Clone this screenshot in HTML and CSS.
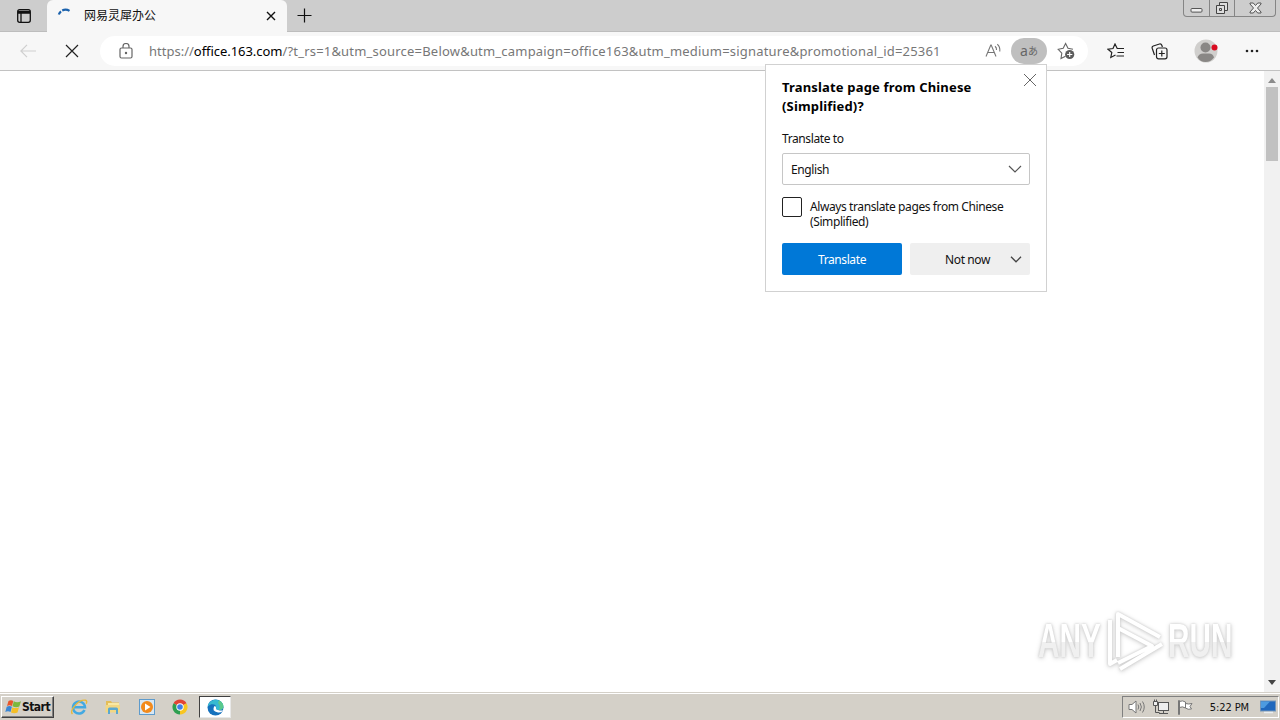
FILE: index.html
```
<!DOCTYPE html>
<html lang="en">
<head>
  <meta charset="UTF-8">
  <meta name="viewport" content="width=device-width, initial-scale=1.0">
  <title>网易灵犀办公</title>
  <link rel="stylesheet" href="styles.css">
</head>
<body>

  <header class="tab-strip">
    <button class="tab-actions" aria-label="Tab actions">
      <svg width="16" height="16" viewBox="0 0 16 16" fill="none" stroke="#111" stroke-width="1.3">
        <rect x="1.7" y="1.7" width="12.6" height="12.6" rx="2"/>
        <path d="M2 3.5h12M2 5h12M5 5v9"/>
      </svg>
    </button>
    <div class="tab">
      <svg class="spinner" width="16" height="16" viewBox="0 0 16 16" fill="none" stroke="#1b62ad" stroke-width="2.2">
        <path d="M1.8 6.5A7 7 0 0 1 4 3.3M5.2 2.4A7.3 7.3 0 0 1 12.5 2.8"/>
      </svg>
      <span class="tab-title">网易灵犀办公</span>
      <button class="tab-close" aria-label="Close tab">
        <svg width="10" height="10" viewBox="0 0 10 10" stroke="#111" stroke-width="1.4"><path d="M1 1l8 8M9 1l-8 8"/></svg>
      </button>
    </div>
    <button class="new-tab" aria-label="New tab">
      <svg width="15" height="15" viewBox="0 0 15 15" stroke="#111" stroke-width="1.2"><path d="M7.5 .5v14M.5 7.5h14"/></svg>
    </button>
    <div class="window-buttons">
      <button class="win-min" aria-label="Minimize">
        <svg width="13" height="14" viewBox="0 0 13 14" fill="#eee" stroke="#555"><rect x="1" y="7.5" width="11" height="3.6" rx="1"/></svg>
      </button>
      <button class="win-restore" aria-label="Restore">
        <svg width="14" height="14" viewBox="0 0 14 14" fill="#ddd" stroke="#444"><path d="M4.5 1.5h8v8h-8z"/><path d="M1.5 4.5h8v8h-8z"/><path d="M4.5 7.5h2v2h-2z"/></svg>
      </button>
      <button class="win-close" aria-label="Close">
        <svg width="13" height="12" viewBox="0 0 13 12" fill="#eee" stroke="#555"><path d="M1 1h3.3l2.2 2.5L8.7 1H12v1L8.5 6l3.5 4v1H8.7L6.5 8.5 4.3 11H1v-1l3.5-4L1 2z"/></svg>
      </button>
    </div>
  </header>

  <nav class="toolbar">
    <button class="back" aria-label="Back">
      <svg width="16" height="14" viewBox="0 0 16 14" fill="none" stroke="#cfcfcf" stroke-width="1.2"><path d="M7 .8L.9 7 7 13.2M1 7h15"/></svg>
    </button>
    <button class="stop" aria-label="Stop">
      <svg width="14" height="14" viewBox="0 0 14 14" stroke="#222" stroke-width="1.2"><path d="M1 1l12 12M13 1L1 13"/></svg>
    </button>
    <div class="address-bar">
      <svg class="lock" width="14" height="16" viewBox="0 0 14 16" fill="none" stroke="#666" stroke-width="1.2">
        <rect x="1" y="5" width="12" height="10" rx="1.5"/><path d="M4 5V3.5a3 3 0 0 1 6 0V5"/><circle cx="7" cy="10" r=".6" fill="#666"/>
      </svg>
      <span class="url"><span class="scheme">https://</span><b>office.163.com</b>/?t_rs=1&amp;utm_source=Below&amp;utm_campaign=office163&amp;utm_medium=signature&amp;promotional_id=25361</span>
      <svg class="read-aloud" width="17" height="16" viewBox="0 0 17 16" fill="none" stroke="#777" stroke-width="1.1">
        <path d="M1 13.5L5.8 2h.4L11 13.5M2.9 9.5h6.2M10 3.2q1.8 1.3 1.5 3.8M12.3 1.2q3 2.4 2.5 7.3"/>
      </svg>
      <span class="translate-pill">a<small>あ</small></span>
      <svg class="favorite" width="18" height="18" viewBox="0 0 18 18" fill="none" stroke="#666" stroke-width="1.1">
        <path d="M8.5 14.2L4 16.5 4.8 11.2 1.2 7.3 6.2 6.3 8.6 1.5 11 6.3 16 7.2"/>
        <circle cx="12.7" cy="12.5" r="4.6" fill="#5c5c5c" stroke="none"/><path d="M12.7 9.9v5.2M10.1 12.5h5.2" stroke="#fff"/>
      </svg>
    </div>
    <svg class="favorites" width="18" height="16" viewBox="0 0 18 16" fill="none" stroke="#222" stroke-width="1.2">
      <path d="M8.5 12L3.8 14.5 4.8 9.5 1 6.2 6 5.5 8 1 10.2 5.5H17M10.5 9.5H17M9.5 13H17"/>
    </svg>
    <svg class="collections" width="17" height="17" viewBox="0 0 17 17" fill="none" stroke="#222" stroke-width="1.2">
      <path d="M3.5 12L1.2 5.2Q.7 3.6 2.3 3L8.5 1Q10.2.6 10.8 2.2L11.4 4"/>
      <rect x="5.5" y="5" width="10.5" height="10.8" rx="2"/><path d="M10.8 7.5v6M7.8 10.5h6"/>
    </svg>
    <svg class="profile" width="24" height="24" viewBox="0 0 24 24">
      <circle cx="12" cy="12" r="11.5" fill="#d0cfcd"/><circle cx="11.5" cy="8.5" r="5" fill="#898785"/>
      <path d="M3.5 18.5Q5 14.5 9 14.5h6q4 0 5 4-3.5 4.5-8.5 4.5t-8-4.5z" fill="#898785"/>
      <circle cx="20.5" cy="8.5" r="3" fill="#d90b20"/>
    </svg>
    <svg class="more" width="14" height="4" viewBox="0 0 14 4" fill="#222"><circle cx="2" cy="2" r="1.3"/><circle cx="7" cy="2" r="1.3"/><circle cx="12" cy="2" r="1.3"/></svg>
  </nav>

  <main class="page">
    <div class="viewport">
      <div class="watermark">
        <span class="mark-any">ANY</span>
        <svg width="58" height="62" viewBox="0 0 58 62" fill="none" stroke="#fff" stroke-width="4" stroke-linejoin="round">
          <path d="M12 47V4L54 27M12 18L46 36 12 53M4 10v44l7-4M14 59L56 34"/>
        </svg>
        <span class="mark-run">RUN</span>
      </div>
    </div>
    <div class="scrollbar">
      <svg width="8" height="5" viewBox="0 0 8 5" fill="#8b8b8b"><path d="M0 5L4 0l4 5z"/></svg>
      <div class="thumb"></div>
      <svg class="down" width="8" height="5" viewBox="0 0 8 5" fill="#444"><path d="M0 0h8L4 5z"/></svg>
    </div>
  </main>

  <section class="translate-popup">
    <button class="popup-close" aria-label="Close">
      <svg width="14" height="14" viewBox="0 0 14 14" stroke="#666" stroke-width="1"><path d="M1 1l12 12M13 1L1 13"/></svg>
    </button>
    <h1>Translate page from Chinese<br>(Simplified)?</h1>
    <p class="label">Translate to</p>
    <div class="select">
      <span>English</span>
      <svg width="14" height="8" viewBox="0 0 14 8" fill="none" stroke="#555" stroke-width="1.2"><path d="M1 1l6 6 6-6"/></svg>
    </div>
    <label class="always">
      <span class="checkbox"></span>
      <span class="always-text">Always translate pages from Chinese<br>(Simplified)</span>
    </label>
    <div class="actions">
      <button class="btn primary">Translate</button>
      <button class="btn secondary"><span>Not now</span>
        <svg width="12" height="7" viewBox="0 0 12 7" fill="none" stroke="#444" stroke-width="1.3"><path d="M1 .8l5 5 5-5"/></svg>
      </button>
    </div>
  </section>

  <footer class="taskbar">
    <button class="start">
      <svg width="17" height="16" viewBox="0 0 17 16">
        <path d="M3.5 2Q6 .4 8.3 2L7 7Q4.5 5.5 2 7z" fill="#e8562a"/>
        <path d="M8.8 2.3Q12 4 16 2.3L14.3 7.5Q11 9 7.5 7.3z" fill="#7cb83c"/>
        <path d="M1.7 7.7Q4.5 6.2 6.9 7.7L5.5 13Q3 11.5.3 13z" fill="#3a86d4"/>
        <path d="M7.3 8.2Q10.5 10 14 8.2L12.5 13.5Q9.5 15 6 13.5z" fill="#f5bf27"/>
      </svg>
      <span>Start</span>
    </button>
    <div class="quick-launch">
      <svg width="18" height="18" viewBox="0 0 18 18" fill="none">
        <path d="M14.5 12A6 6 0 1 1 15 9.3H4" stroke="#43a9e2" stroke-width="2.5"/>
        <path d="M2.5 16C-1 12.5 9 1 15.5 2.3q2 .5.7 3.5" stroke="#e8b93c" stroke-width="1.4"/>
      </svg>
      <svg width="18" height="18" viewBox="0 0 18 18">
        <path d="M2 3h5l1 1.5h7V14H2z" fill="#e4bd58"/><path d="M4 5h11v8H4z" fill="#f9e8a3"/>
        <path d="M1.5 7H16v7.5H1.5z" fill="#f2d783"/><path d="M4 16v-5q0-1.5 1.5-1.5h7Q14 9.5 14 11v5h-2v-4H6v4z" fill="#5ba8d0"/>
      </svg>
      <svg width="18" height="18" viewBox="0 0 18 18">
        <rect x="1.5" y="1.5" width="15" height="15" fill="#d7e7f4" stroke="#5e9bcc"/>
        <circle cx="9" cy="9" r="6" fill="#f28a1c"/><path d="M7 5.5l5.5 3.5L7 12.5z" fill="#fff"/>
      </svg>
      <svg width="16" height="16" viewBox="0 0 16 16">
        <path d="M8 8L1.5 4.25A7.5 7.5 0 0 1 14.5 4.25z" fill="#e24435"/>
        <path d="M8 8l6.5-3.75A7.5 7.5 0 0 1 8 15.5z" fill="#f8c620"/>
        <path d="M8 8v7.5A7.5 7.5 0 0 1 1.5 4.25z" fill="#2d9f50"/>
        <circle cx="8" cy="8" r="3.7" fill="#fff"/><circle cx="8" cy="8" r="2.8" fill="#3f7fe8"/>
      </svg>
    </div>
    <div class="task-active">
      <svg width="17" height="17" viewBox="0 0 17 17">
        <circle cx="8.5" cy="8.5" r="8" fill="#1571bd"/>
        <path d="M.6 7.5C2 1 9-1 13.5 2.3 18 6 16.8 11 12 11q-3 0-3.2-1.5C10.5 6.5 6 3 .6 7.5z" fill="#36b9d1"/>
        <path d="M12 1.3Q17 4 16.4 8.5 15.5 11 12 11q2-4-1-7z" fill="#59c98c"/>
        <path d="M7.5 7Q4 12 11 13.5q2.5.3 4.7-1.2L17 11.3Q14 12 11 11 8.5 10.5 9 8.5 9 7 7.5 7z" fill="#fff"/>
      </svg>
    </div>
    <div class="tray">
      <svg width="18" height="16" viewBox="0 0 18 16" fill="none" stroke="#777">
        <path d="M1 5.5h3L8 2v12l-4-3.5H1z" fill="#fff"/><path d="M10 5.5q1.5 2.5 0 5M12 4q2.8 4 0 8M14.5 2.5q3.5 5.5 0 11"/>
      </svg>
      <svg width="17" height="16" viewBox="0 0 17 16" fill="#eee" stroke="#555">
        <rect x="5.5" y="3.5" width="10" height="8"/><path d="M6 14.5h9M10.5 12v2"/><path d="M2.5 6v7.5h4" fill="none"/><path d="M.5 2.5h4v4h-4zM1.5 .5v2M3.5 .5v2"/>
      </svg>
      <svg width="17" height="16" viewBox="0 0 17 16" fill="#fff" stroke="#777">
        <path d="M1.5 1.5v14h1v-14zM2.5 2.5q3-1.5 6 .5v6q-3-2-6-.5zM8.5 4.5q3 1 6.5 0l-2 3 1.5 2.5q-3.5 1-6-1"/>
      </svg>
      <span class="clock">5:22 PM</span>
      <svg width="16" height="14" viewBox="0 0 16 14"><rect x=".5" y="1" width="15" height="10" fill="#2068bd" stroke="#7495b8"/><path d="M1 1.5h9L4 8H1z" fill="#4d9be0"/><path d="M4 12.5h9" stroke="#e9edf0" stroke-width="1.5"/></svg>
    </div>
  </footer>

</body>
</html>
```
FILE: styles.css
```
* {
  box-sizing: border-box;
}

body {
  margin: 0;
  width: 1280px;
  height: 720px;
  overflow: hidden;
  display: flex;
  flex-direction: column;
  background: #fff;
  color: #111;
  font-family: "Noto Sans", "Noto Sans CJK SC", sans-serif;
  font-size: 12px;
}

button {
  border: 0;
  padding: 0;
  background: none;
  font: inherit;
  color: inherit;
  letter-spacing: inherit;
  display: flex;
  align-items: center;
  justify-content: center;
}

svg {
  flex: none;
  display: block;
}

/* tabs */
.tab-strip {
  flex: none;
  height: 32px;
  display: flex;
  background: #cdcdcd;
  border-bottom: 1px solid #bdbdbd;
}

.tab-actions {
  width: 47px;
  height: 31px;
}

.tab {
  width: 240px;
  height: 32px;
  padding: 0 11px 0 10px;
  display: flex;
  align-items: center;
  background: #f7f7f7;
  border-radius: 6px 6px 0 0;
}

.tab-title {
  margin: -3px 0 0 11px;
  flex: 1;
  font-family: "Noto Sans CJK SC", sans-serif;
}

.new-tab {
  width: 35px;
  height: 31px;
}

.window-buttons {
  margin: 0 4px 0 auto;
  height: 17px;
  display: flex;
  border: 1px solid #858585;
  border-top: 0;
  border-radius: 0 0 4px 4px;
}

.window-buttons button {
  width: 25px;
}

.window-buttons button + button {
  border-left: 1px solid #858585;
}

.window-buttons .win-close {
  width: 41px;
}

/* toolbar */
.toolbar {
  flex: none;
  height: 39px;
  display: flex;
  align-items: center;
  background: #f7f7f7;
  border-bottom: 1px solid #c2c2c2;
}

.back {
  margin-left: 20px;
}

.stop {
  margin-left: 29px;
}

.address-bar {
  width: 988px;
  height: 30px;
  margin-left: 21px;
  padding-left: 19px;
  display: flex;
  align-items: center;
  background: #fff;
  border-radius: 15px;
}

.url {
  width: 836px;
  margin-left: 16px;
  color: #777;
  font-size: 13px;
  letter-spacing: 0.2px;
  white-space: nowrap;
}

.url .scheme {
  letter-spacing: 0;
}

.url b {
  color: #000;
  font-weight: normal;
  letter-spacing: -0.05px;
}

.translate-pill {
  width: 36px;
  height: 26px;
  margin: 0 10px 0 9px;
  padding-bottom: 2px;
  display: flex;
  align-items: center;
  justify-content: center;
  border-radius: 13px;
  background: #bfbfbf;
  color: #666;
  font-size: 14px;
}

.translate-pill small {
  font-size: 10px;
}

.favorites {
  margin-left: 19px;
}

.collections {
  margin-left: 26px;
}

.profile {
  margin-left: 26px;
}

.more {
  margin-left: 27px;
}

/* page */
.page {
  flex: 1;
  display: flex;
}

.viewport {
  flex: 1;
  display: flex;
  align-items: flex-end;
  justify-content: flex-end;
}

.watermark {
  margin: 0 30px 20px 0;
  display: flex;
  align-items: center;
  color: #fff;
  font-family: "Liberation Sans", Arial, sans-serif;
  font-size: 48px;
  font-weight: bold;
  line-height: 62px;
  filter: drop-shadow(0 0 1px #ccc) drop-shadow(0 1px 2px #d4d4d4);
}

.watermark span {
  width: 106px;
  transform: scaleX(0.62);
  transform-origin: left;
  background: linear-gradient(#fff 52%, #f0f0f0 52%);
  background-clip: text;
  color: transparent;
}

.mark-any {
  margin-right: -41px;
}

.mark-run {
  margin-right: -40px;
}

.watermark svg {
  margin: 0 4px 0 3px;
}

.scrollbar {
  width: 16px;
  padding: 7px 0;
  display: flex;
  flex-direction: column;
  align-items: center;
  background: #f1f1f1;
}

.thumb {
  width: 12px;
  height: 74px;
  margin-top: 4px;
  background: #c1c1c1;
}

.scrollbar .down {
  margin-top: auto;
}

/* translate popup */
.translate-popup {
  position: absolute;
  left: 765px;
  top: 64px;
  width: 282px;
  height: 228px;
  padding: 13px 16px 16px;
  background: #fff;
  border: 1px solid #d1d1d1;
  letter-spacing: -0.4px;
}

.popup-close {
  position: absolute;
  top: 8px;
  right: 9px;
}

.translate-popup h1 {
  margin: 0;
  font-size: 13px;
  line-height: 19px;
  letter-spacing: 0.17px;
  color: #000;
}

.label {
  margin: 14px 0 5px;
  line-height: 18px;
}

.select {
  height: 32px;
  padding: 0 7px 0 8px;
  display: flex;
  align-items: center;
  justify-content: space-between;
  border: 1px solid #c6c6c6;
  border-radius: 2px;
}

.always {
  height: 58px;
  padding-top: 12px;
  display: flex;
  line-height: 15px;
  white-space: nowrap;
}

.checkbox {
  flex: none;
  width: 20px;
  height: 20px;
  margin-right: 8px;
  border: 1px solid #222;
  border-radius: 2px;
}

.always-text {
  padding-top: 2px;
}

.actions {
  display: flex;
  gap: 8px;
}

.btn {
  width: 120px;
  height: 32px;
  border-radius: 2px;
}

.primary {
  background: #0078d7;
  color: #fff;
}

.secondary {
  padding-right: 8px;
  justify-content: flex-end;
  gap: 20px;
  background: #efefef;
}

/* taskbar */
.taskbar {
  flex: none;
  height: 28px;
  padding: 2px 1px 1px;
  display: flex;
  align-items: center;
  background: #d4d0c8;
  border-top: 1px solid #d4d0c8;
  box-shadow: inset 0 1px #fff;
}

.start {
  width: 53px;
  height: 22px;
  border: 1px solid;
  border-color: #fff #404040 #404040 #fff;
  box-shadow: inset -1px -1px #808080;
  font: bold 12px "DejaVu Sans Condensed", "DejaVu Sans", sans-serif;
  letter-spacing: -0.5px;
}

.quick-launch {
  margin-left: 16px;
  display: flex;
  align-items: center;
  gap: 16px;
}

.task-active {
  width: 32px;
  height: 22px;
  margin-left: 11px;
  display: flex;
  align-items: center;
  justify-content: center;
  background: #fff;
  border: 1px solid;
  border-color: #404040 #e8e8e8 #e8e8e8 #404040;
}

.tray {
  width: 157px;
  height: 22px;
  margin-left: auto;
  padding: 0 2px 0 5px;
  display: flex;
  align-items: center;
  gap: 7px;
  border: 1px solid;
  border-color: #808080 #fff #fff #808080;
  font: 11px "DejaVu Sans Condensed", sans-serif;
  letter-spacing: -0.1px;
}

.clock {
  margin: 0 4px 0 auto;
}
```
